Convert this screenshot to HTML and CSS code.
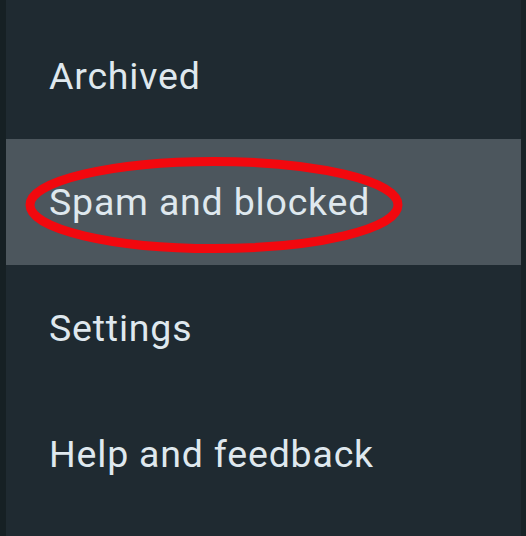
FILE: index.html
```html
<!DOCTYPE html>
<html>
<head>
<meta charset="utf-8">
<link rel="stylesheet" href="styles.css">
</head>
<body>
<div class="frame">
  <div class="edge-left"></div>
  <nav class="panel">
    <div class="item">Archived</div>
    <div class="item active">
      <span>Spam and blocked</span>
      <svg class="mark" width="378" height="96" viewBox="0 0 378 96"><ellipse cx="189" cy="48" rx="184" ry="43.5" fill="none" stroke="#f2080e" stroke-width="9"/></svg>
    </div>
    <div class="item">Settings</div>
    <div class="item">Help and feedback</div>
  </nav>
  <div class="edge-right"></div>
</div>
</body>
</html>
```
FILE: styles.css
```css
html, body {
  margin: 0;
  padding: 0;
  background: #1e292f;
}
.frame {
  display: flex;
  width: 526px;
  height: 536px;
  overflow: hidden;
}
.edge-left {
  width: 6px;
  background: #162024;
}
.edge-right {
  width: 5px;
  background: #182327;
}
.panel {
  flex: 1;
  background: #1f2a31;
  padding-top: 13px;
  display: flex;
  flex-direction: column;
}
.item {
  position: relative;
  height: 126px;
  display: flex;
  align-items: center;
  padding-left: 43px;
  font-family: Roboto, "Noto Sans", sans-serif;
  font-size: 37.5px;
  color: #dfe8ee;
  letter-spacing: 0.8px;
}
.item.active {
  background: #4c565d;
}
.mark {
  position: absolute;
  left: 19px;
  top: 18px;
}
```
